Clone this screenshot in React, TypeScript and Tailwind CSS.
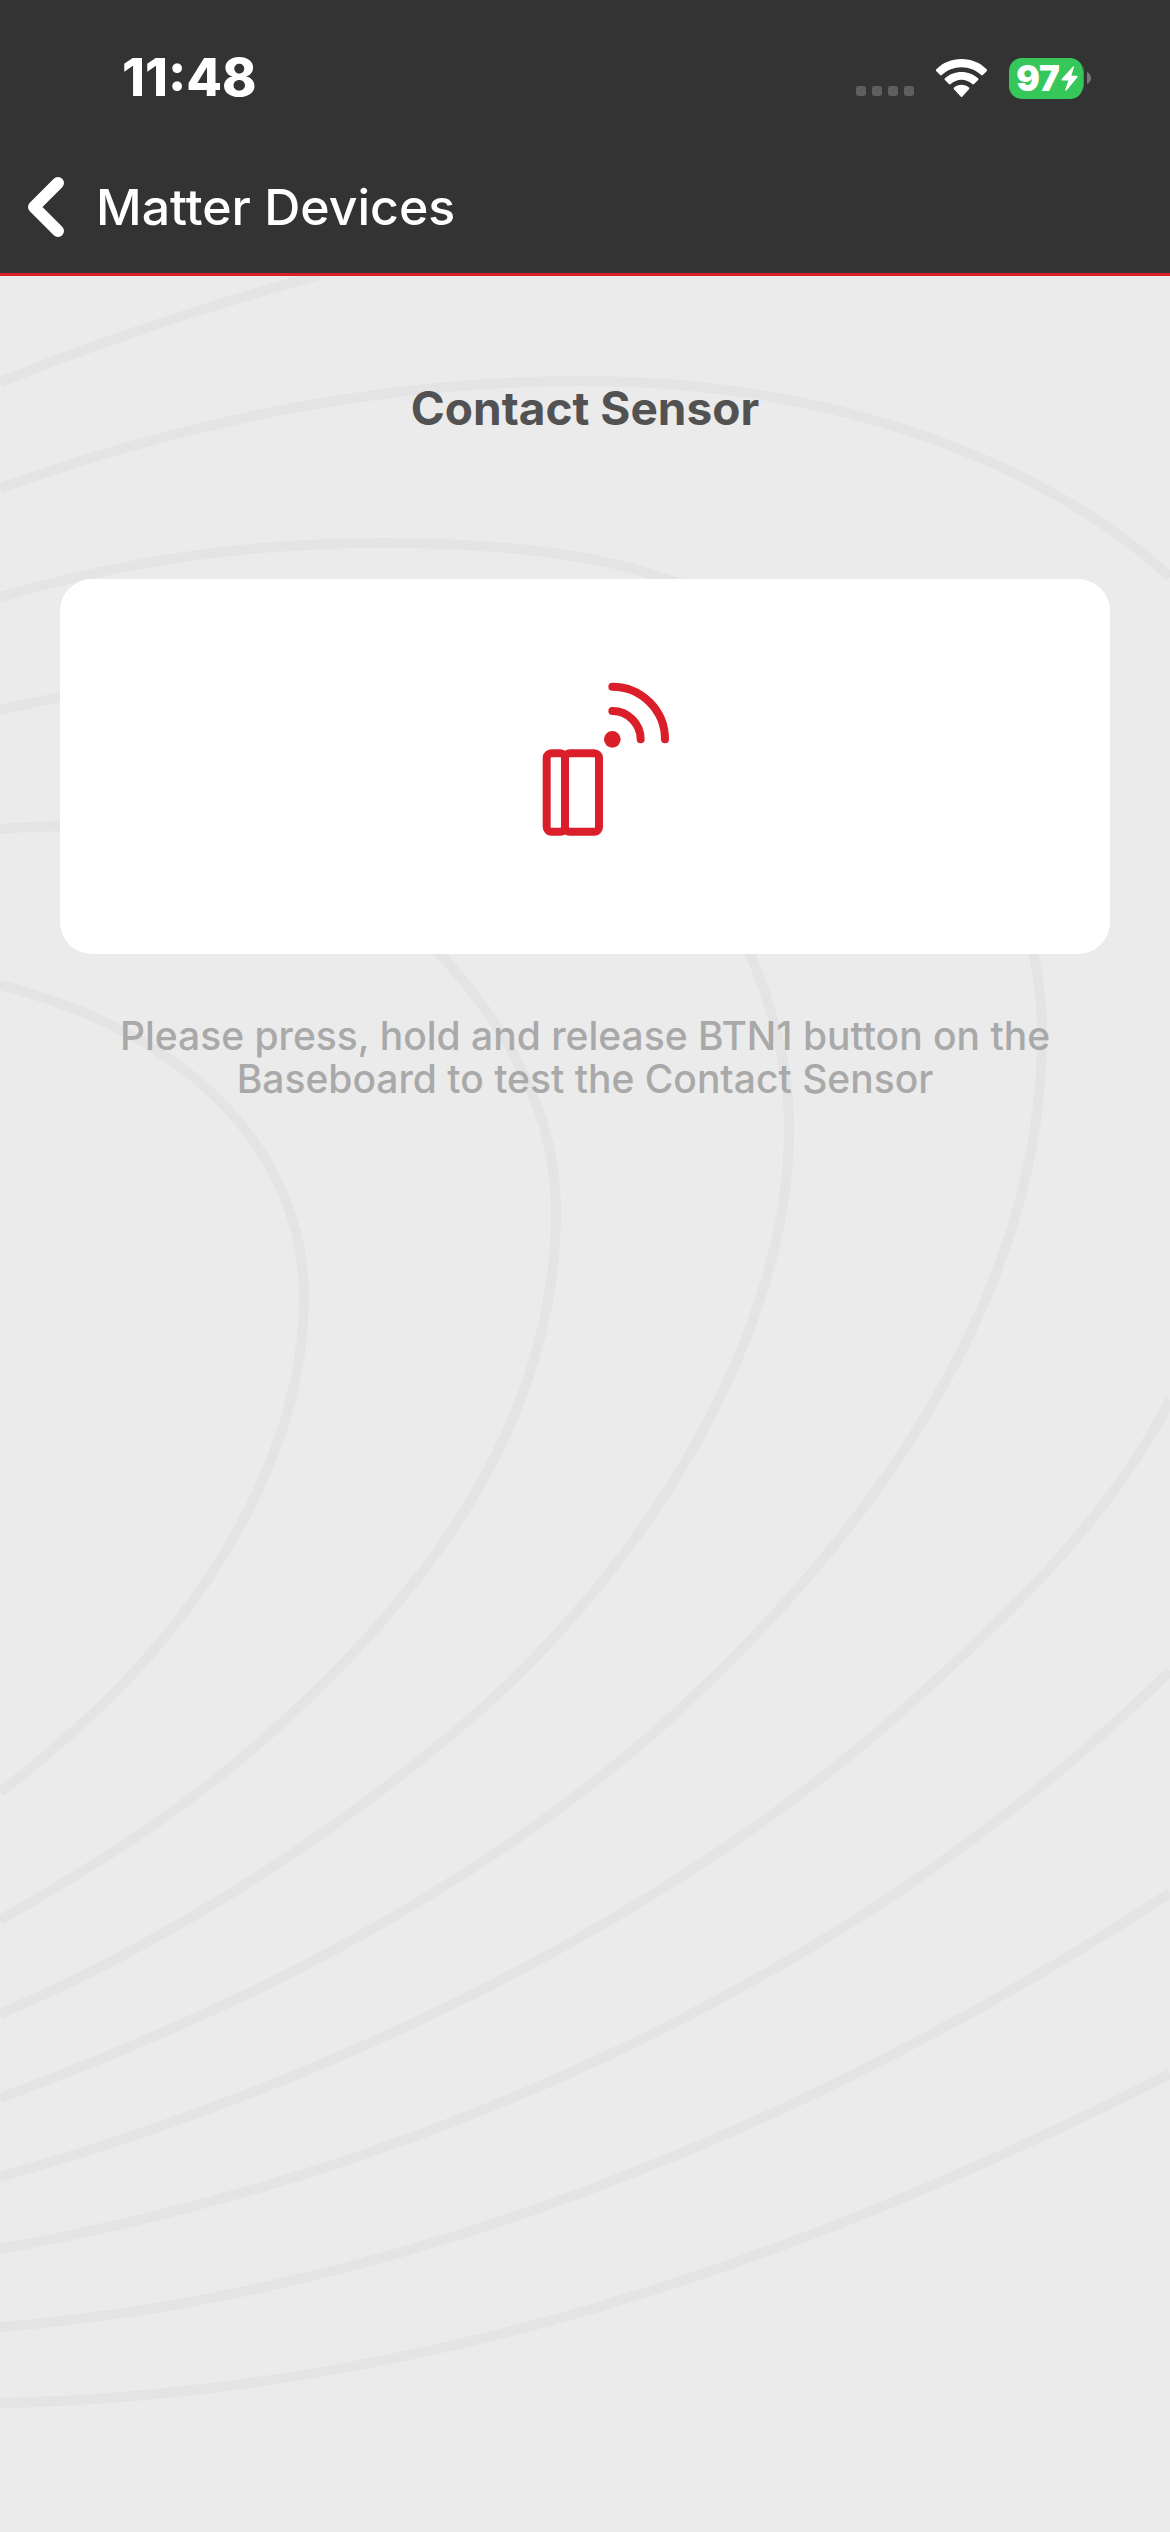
const CONTOURS = [
  "M0 382Q160 318 320 275",
  "M0 488C200 417 390 381 582 381C840 381 1050 466 1170 577",
  "M0 597C130 560 250 543 381 543C490 543 590 553 660 577C880 640 1042 830 1042 1035C1042 1290 880 1530 657 1730C450 1910 210 2020 0 2098",
  "M0 710C330 630 650 720 750 954C776 1014 789 1070 789 1130C789 1330 650 1568 457 1730C310 1853 150 1950 0 2014",
  "M0 829C200 815 340 850 440 954C510 1030 556 1115 556 1210C556 1420 430 1590 274 1730C190 1806 100 1863 0 1920",
  "M0 985C200 1035 304 1160 304 1297C304 1450 210 1610 75 1730C50 1752 25 1774 0 1792",
  "M1170 1400C1110 1520 1000 1625 878 1732C630 1942 300 2092 0 2177",
  "M1170 1671C840 1995 390 2180 0 2249",
  "M1170 1893C790 2140 380 2297 0 2327",
  "M1170 2074C780 2272 400 2395 0 2403",
];

function ContourBackground() {
  return (
    <svg
      aria-hidden="true"
      viewBox="0 276 1170 2256"
      preserveAspectRatio="xMidYMin slice"
      className="absolute inset-0 h-full w-full"
      fill="none"
      stroke="#e4e4e4"
      strokeWidth="10"
    >
      {CONTOURS.map((d) => (
        <path key={d} d={d} />
      ))}
    </svg>
  );
}

function SignalDots() {
  return (
    <svg viewBox="0 0 58 42" className="h-[42px] w-[58px]" fill="#5f5f5f" aria-hidden="true">
      <rect x="0" y="29" width="10" height="10" rx="3" />
      <rect x="16" y="29" width="10" height="10" rx="3" />
      <rect x="32" y="29" width="10" height="10" rx="3" />
      <rect x="48" y="29" width="10" height="10" rx="3" />
    </svg>
  );
}

function WifiIcon() {
  return (
    <svg viewBox="0 0 150 112" className="h-[38px] w-[51px]" fill="#fff" aria-hidden="true">
      <path d="M75 0C104 0 130 11 149 30Q152 33 149 36L138 47Q136 49 133 47C117 32 97 24 75 24S33 32 17 47Q14 49 12 47L1 36Q-2 33 1 30C20 11 46 0 75 0Z" />
      <path d="M75 38C94 38 111 45 124 57Q126 60 124 62L112 74Q109 76 107 74C98 66 87 61 75 61S52 66 43 74Q41 76 38 74L26 62Q24 60 26 57C39 45 56 38 75 38Z" />
      <path d="M75 76C83 76 91 79 97 84Q99 86 97 89L77 111Q75 113 73 111L53 89Q51 86 53 84C59 79 67 76 75 76Z" />
    </svg>
  );
}

function Battery() {
  return (
    <div className="flex items-center">
      <div className="flex h-[41px] w-[74px] items-center justify-center gap-px rounded-[13px] bg-[#35c759] pl-0.5">
        <span className="text-[35px] leading-none font-black">97</span>
        <svg viewBox="0 0 51 76" className="h-[25px] w-[17px]" fill="#fff" aria-hidden="true">
          <path d="M37 1Q40 0 39 4L31 30H48Q52 31 49 35L17 74Q12 77 13 71L22 44H4Q-1 43 3 38Z" />
        </svg>
      </div>
      <svg viewBox="0 0 8 42" className="h-[42px] w-2" fill="#77777a" aria-hidden="true">
        <path d="M0 9Q1 12 1 16V26Q1 30 0 33Z" />
        <path d="M4 15Q8 17 8 21T4 27Z" />
      </svg>
    </div>
  );
}

function StatusBar() {
  return (
    <div className="flex h-[156px] items-center justify-between pr-[79px] pl-[122px]">
      <time className="text-[52px] leading-none font-extrabold">11:48</time>
      <div className="flex items-center gap-[22px]">
        <SignalDots />
        <WifiIcon />
        <Battery />
      </div>
    </div>
  );
}

function ContactSensorIcon() {
  return (
    <svg
      viewBox="-45 20 600 600"
      className="size-[200px]"
      fill="none"
      stroke="#da1f2a"
      strokeWidth="24"
      strokeLinecap="round"
      role="img"
      aria-label="Contact sensor"
    >
      <rect x="140" y="279" width="55" height="235" rx="14" />
      <rect x="195" y="279" width="102" height="235" rx="14" />
      <path d="M337 152A85 85 0 0 1 422 237" />
      <path d="M337 79A158 158 0 0 1 495 237" />
      <circle cx="337" cy="237" r="25" fill="#da1f2a" stroke="none" />
    </svg>
  );
}

export default function App() {
  return (
    <div className="flex min-h-screen flex-col bg-[#ebebeb] font-['Inter',sans-serif]">
      <header className="border-b-[3px] border-[#d81f2a] bg-[#333333] text-white">
        <StatusBar />
        <div className="mb-[15px] flex h-[102px] items-center">
          <button type="button" aria-label="Back" className="pr-8 pl-7">
            <svg
              viewBox="0 0 36 60"
              className="h-[60px] w-9"
              fill="none"
              stroke="currentColor"
              strokeWidth="12"
              strokeLinecap="round"
              strokeLinejoin="round"
            >
              <path d="M30 6L6 30L30 54" />
            </svg>
          </button>
          <h1 className="text-[50px] leading-none font-medium">Matter Devices</h1>
        </div>
      </header>

      <main className="relative flex-1">
        <ContourBackground />
        <div className="relative flex flex-col items-center px-[60px] pt-[108px] text-center">
          <h2 className="text-[46px] leading-[48px] font-bold text-[#525252]">Contact Sensor</h2>
          <div className="mt-[147px] flex h-[375px] w-full items-center justify-center rounded-[32px] bg-white">
            <ContactSensorIcon />
          </div>
          <p className="mt-[60px] text-[39px] leading-[43px] font-medium text-[#a9a9a9]">
            Please press, hold and release BTN1 button on the
            <br />
            Baseboard to test the Contact Sensor
          </p>
        </div>
      </main>
    </div>
  );
}
